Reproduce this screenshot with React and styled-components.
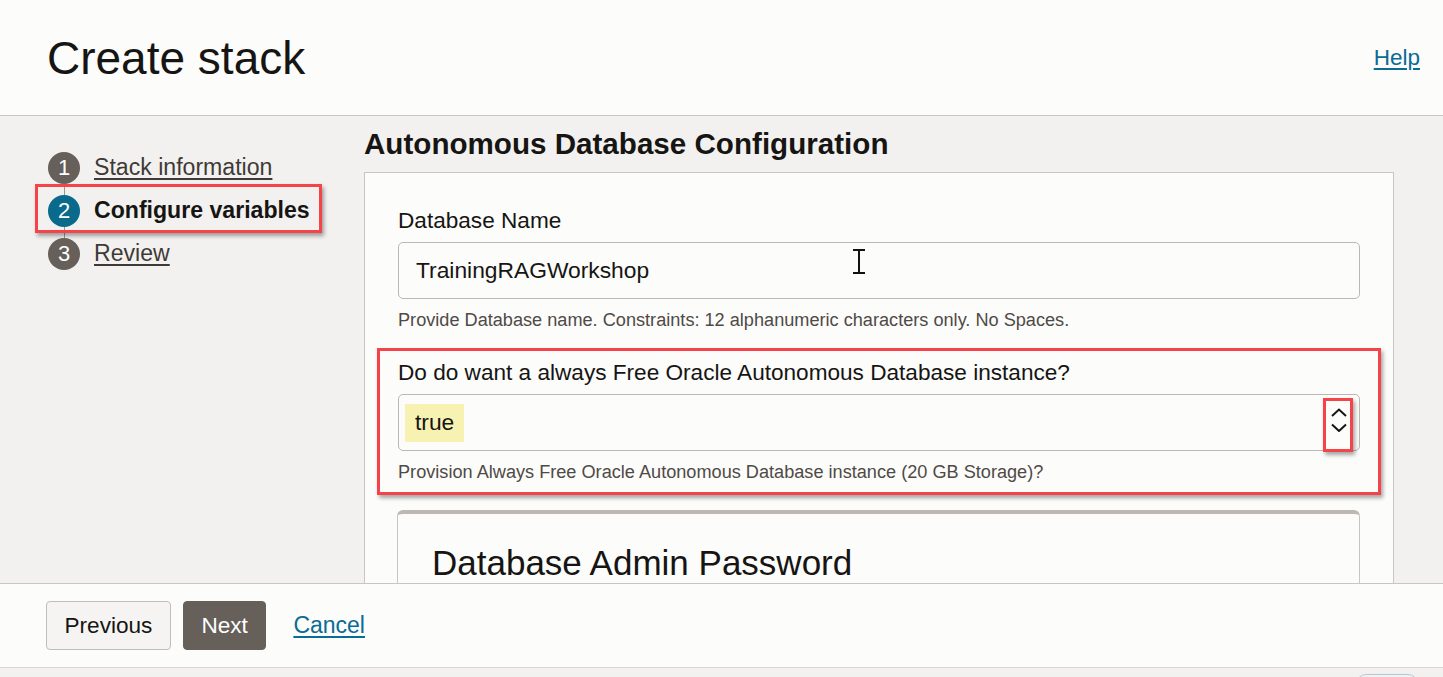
import React from "react";
import styled, { createGlobalStyle } from "styled-components";

const GlobalStyle = createGlobalStyle`
  html, body {
    margin: 0;
    padding: 0;
    background: #f2f1ef;
  }
  body {
    font-family: "Liberation Sans", Arial, sans-serif;
    color: #161513;
  }
`;

const Page = styled.div`
  height: 677px;
  width: 1443px;
  display: flex;
  flex-direction: column;
  overflow: hidden;
`;

const Header = styled.header`
  height: 115px;
  flex: none;
  display: flex;
  align-items: center;
  justify-content: space-between;
  padding: 0 23px 0 47px;
  background: #fcfcfb;
  border-bottom: 1px solid #c9c6c2;
`;

const Title = styled.h1`
  margin: 0;
  font-size: 46px;
  font-weight: 400;
  line-height: 1;
  color: #161513;
`;

const Link = styled.a`
  font-size: ${(p) => p.size || 22.5}px;
  color: #0b6b94;
  text-decoration: underline;
  text-underline-offset: 3px;
  cursor: pointer;
`;

const Body = styled.div`
  height: 467px;
  flex: none;
  display: flex;
  overflow: hidden;
  background: #f2f1ef;
`;

const Sidebar = styled.nav`
  width: 316px;
  flex: none;
  padding: 30px 0 0 48px;
`;

const Steps = styled.ol`
  position: relative;
  list-style: none;
  margin: 0;
  padding: 0;
  &::before {
    content: "";
    position: absolute;
    left: 16px;
    top: 21px;
    bottom: 21px;
    width: 1px;
    background: #9b948e;
  }
`;

const Step = styled.li`
  position: relative;
  height: 43px;
  display: flex;
  align-items: center;
  gap: 14px;
  width: max-content;
`;

const Circle = styled.span`
  position: relative;
  z-index: 1;
  width: 32px;
  height: 32px;
  border-radius: 50%;
  background: ${(p) => (p.active ? "#0a6a8c" : "#665f5a")};
  color: #fff;
  font-size: 22px;
  display: flex;
  align-items: center;
  justify-content: center;
`;

const StepLabel = styled.span`
  font-size: 23.1px;
  color: ${(p) => (p.active ? "#161513" : "#3f3a36")};
  font-weight: ${(p) => (p.active ? 700 : 400)};
  text-decoration: ${(p) => (p.active ? "none" : "underline")};
  text-underline-offset: 3px;
`;

const Marked = styled.div`
  position: relative;
  &::after {
    content: "";
    position: absolute;
    top: ${(p) => p.t}px;
    bottom: ${(p) => p.b}px;
    left: ${(p) => p.l}px;
    right: ${(p) => p.r}px;
    border: 3px solid #f5434a;
    box-shadow: 2px 3px 4px rgba(0, 0, 0, 0.35);
    pointer-events: none;
  }
`;

const MarkedStep = styled(Marked)`
  width: max-content;
`;

const Main = styled.main`
  flex: 1;
  padding: 11px 49px 0 0;
  min-width: 0;
`;

const SectionTitle = styled.h2`
  margin: 0 0 11px;
  font-size: 29.6px;
  line-height: 34px;
  font-weight: 700;
  color: #161513;
`;

const Panel = styled.section`
  background: #fcfcfb;
  border: 1px solid #c9c5bf;
  padding: 34px 33px 40px;
`;

const Field = styled.div`
  & + & {
    margin-top: 29px;
  }
`;

const Label = styled.div`
  font-size: 22.6px;
  line-height: 27px;
  margin-bottom: 8px;
  color: #161513;
`;

const Control = styled.div`
  position: relative;
  height: 57px;
  box-sizing: border-box;
  border: 1px solid #bcb7b0;
  border-radius: 5px;
  background: #fcfcfb;
  display: flex;
  align-items: center;
  justify-content: space-between;
  padding: 0 12px 0 ${(p) => p.pl || 17}px;
  font-size: 22.8px;
  color: #161513;
`;

const Cursor = styled.svg`
  position: absolute;
  left: 453px;
  top: 6px;
`;

const Chosen = styled.span`
  background: #f7f2b2;
  height: 38px;
  padding: 0 10px;
  display: flex;
  align-items: center;
`;

const Help = styled.div`
  margin-top: 11px;
  font-size: 18.15px;
  line-height: 20px;
  color: #4f4a46;
`;

const SubCard = styled.div`
  margin-top: 28px;
  margin-left: -1px;
  border: 1px solid #c9c5bf;
  border-top: 4px solid #bdb8b1;
  border-radius: 6px 6px 0 0;
  padding: 29px 34px 40px;
`;

const SubTitle = styled.h3`
  margin: 0;
  font-size: 35px;
  line-height: 40px;
  font-weight: 400;
  color: #161513;
`;

const Footer = styled.footer`
  height: 83px;
  flex: none;
  display: flex;
  align-items: center;
  gap: 12px;
  padding-left: 46px;
  background: #fcfcfb;
  border-top: 1px solid #c9c6c2;
  border-bottom: 1px solid #d9d6d2;
`;

const Button = styled.button`
  height: 49px;
  padding: 0 17.5px;
  border-radius: 4px;
  font-family: inherit;
  font-size: 22.6px;
  border: 1px solid ${(p) => (p.primary ? "#665f5a" : "#c2bdb7")};
  background: ${(p) => (p.primary ? "#665f5a" : "#f5f4f2")};
  color: ${(p) => (p.primary ? "#fff" : "#161513")};
  cursor: pointer;
`;

const CancelWrap = styled.span`
  margin-left: 15px;
`;

const Strip = styled.div`
  flex: 1;
  display: flex;
  justify-content: flex-end;
  padding: 6px 25px 0 0;
  background: #f2f1ef;
`;

const Pill = styled.div`
  width: 60px;
  height: 20px;
  border: 1px solid #b9c8cf;
  border-radius: 10px;
  background: #eef3f5;
`;

const steps = [
  { n: 1, label: "Stack information" },
  { n: 2, label: "Configure variables", active: true },
  { n: 3, label: "Review" },
];

function UpDown() {
  return (
    <svg width="16" height="24" viewBox="0 0 16 24" fill="none" stroke="#161513" strokeWidth="2">
      <polyline points="1,8 8,1.5 15,8" />
      <polyline points="1,16.5 8,23 15,16.5" />
    </svg>
  );
}

export default function App() {
  return (
    <Page>
      <GlobalStyle />
      <Header>
        <Title>Create stack</Title>
        <Link size={22.5}>Help</Link>
      </Header>
      <Body>
        <Sidebar>
          <Steps>
            {steps.map((s) => {
              const row = (
                <Step key={s.n}>
                  <Circle active={s.active}>{s.n}</Circle>
                  <StepLabel active={s.active}>{s.label}</StepLabel>
                </Step>
              );
              return s.active ? (
                <MarkedStep key={s.n} t={-5} b={-1} l={-13} r={-12}>
                  {row}
                </MarkedStep>
              ) : (
                row
              );
            })}
          </Steps>
        </Sidebar>
        <Main>
          <SectionTitle>Autonomous Database Configuration</SectionTitle>
          <Panel>
            <Field>
              <Label>Database Name</Label>
              <Control>
                <span>TrainingRAGWorkshop</span>
                <Cursor width="14" height="25" viewBox="0 0 14 25" fill="none" stroke="#111" strokeWidth="2">
                  <line x1="7" y1="1" x2="7" y2="24" />
                  <line x1="1" y1="1" x2="13" y2="1" />
                  <line x1="1" y1="24" x2="13" y2="24" />
                </Cursor>
              </Control>
              <Help>Provide Database name. Constraints: 12 alphanumeric characters only. No Spaces.</Help>
            </Field>
            <Field>
              <Marked t={-11} b={-13} l={-21} r={-21}>
                <Label>Do do want a always Free Oracle Autonomous Database instance?</Label>
                <Control pl={6}>
                  <Chosen>true</Chosen>
                  <Marked t={-10} b={-14} l={-8} r={-6}>
                    <UpDown />
                  </Marked>
                </Control>
                <Help>Provision Always Free Oracle Autonomous Database instance (20 GB Storage)?</Help>
              </Marked>
            </Field>
            <SubCard>
              <SubTitle>Database Admin Password</SubTitle>
            </SubCard>
          </Panel>
        </Main>
      </Body>
      <Footer>
        <Button>Previous</Button>
        <Button primary>Next</Button>
        <CancelWrap>
          <Link size={23}>Cancel</Link>
        </CancelWrap>
      </Footer>
      <Strip>
        <Pill />
      </Strip>
    </Page>
  );
}
